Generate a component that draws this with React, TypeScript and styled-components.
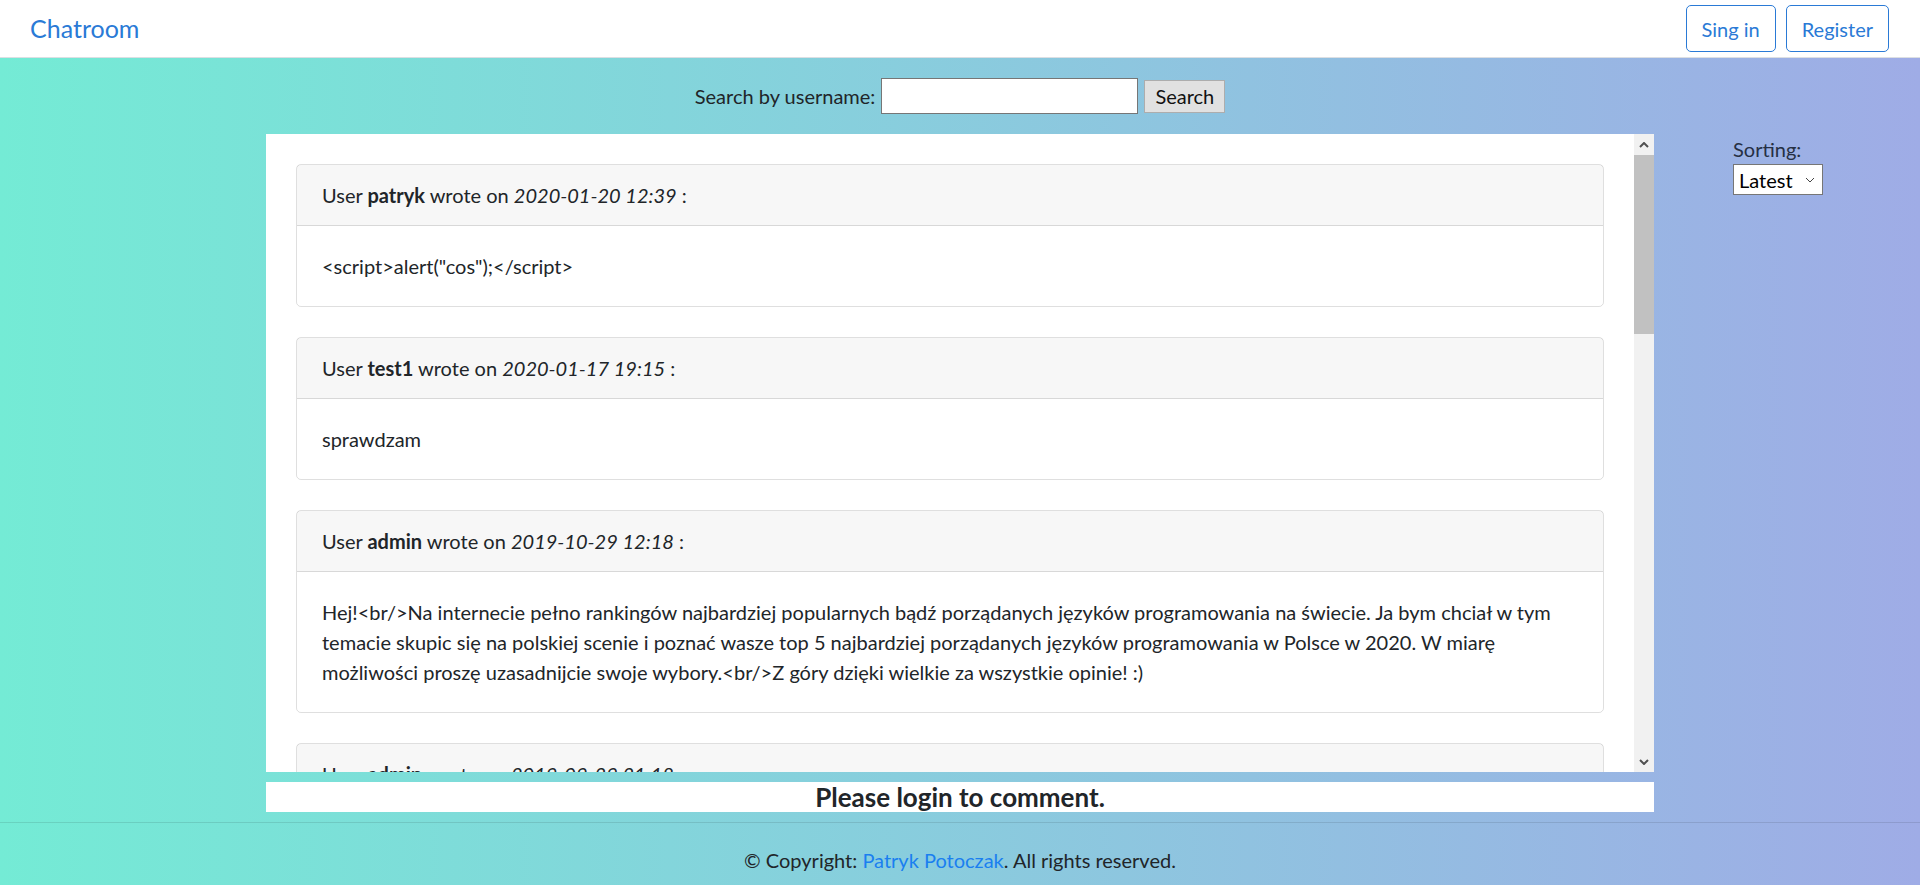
import React from "react";
import styled, { createGlobalStyle } from "styled-components";

interface IPost {
    id: number;
    user: string;
    date: string;
    text: string;
}

const posts: IPost[] = [
    { id: 1, user: "patryk", date: "2020-01-20 12:39", text: '<script>alert("cos");</script>' },
    { id: 2, user: "test1", date: "2020-01-17 19:15", text: "sprawdzam" },
    {
        id: 3,
        user: "admin",
        date: "2019-10-29 12:18",
        text: "Hej!<br/>Na internecie pełno rankingów najbardziej popularnych bądź porządanych języków programowania na świecie. Ja bym chciał w tym temacie skupic się na polskiej scenie i poznać wasze top 5 najbardziej porządanych języków programowania w Polsce w 2020. W miarę możliwości proszę uzasadnijcie swoje wybory.<br/>Z góry dzięki wielkie za wszystkie opinie! :)",
    },
    { id: 4, user: "admin", date: "2019-09-29 21:18", text: "Witajcie na czacie!" },
];

const GlobalStyle = createGlobalStyle`
    html, body {
        margin: 0;
        padding: 0;
    }

    body {
        font-family: "Segoe UI", Lato, "Noto Sans", sans-serif;
        font-size: 20px;
        line-height: 1.5;
        color: #212529;
        background: linear-gradient(90deg, #74ebd5 0%, #9face6 100%);
        min-height: 885px;
        overflow: hidden;
    }
`;

const Page = styled.div`
    display: flex;
    flex-direction: column;
    min-height: 885px;
`;

const Navbar = styled.nav`
    height: 57px;
    background: #fff;
    border-bottom: 1px solid #dcdfe3;
    display: flex;
    align-items: center;
    justify-content: space-between;
    padding: 0 31px 0 30px;
`;

const Brand = styled.a`
    font-size: 25px;
    line-height: 1.5;
    color: #2a7ad6;
    text-decoration: none;
`;

const NavActions = styled.div`
    display: flex;
    gap: 10px;
`;

const OutlineButton = styled.button`
    height: 47px;
    padding: 0 15px;
    font-family: inherit;
    font-size: 20px;
    color: #2a7ad6;
    background: #fff;
    border: 1px solid #2a7ad6;
    border-radius: 5px;
    cursor: pointer;
`;

const SearchForm = styled.form`
    height: 76px;
    display: flex;
    align-items: center;
    justify-content: center;
    gap: 6px;
`;

const SearchInput = styled.input`
    width: 257px;
    height: 36px;
    box-sizing: border-box;
    border: 1px solid #767676;
    background: #fff;
    font-family: inherit;
    font-size: 20px;
    padding: 0 4px;
`;

const SearchButton = styled.button`
    height: 33px;
    padding: 0 10px;
    font-family: inherit;
    font-size: 20px;
    color: #111;
    background: #e1e1e1;
    border: 1px solid #adadad;
    line-height: 1;
`;

const Main = styled.main`
    display: grid;
    grid-template-columns: 1fr 1388px 1fr;
    height: 638px;
`;

const Panel = styled.section`
    grid-column: 2;
    display: flex;
    background: #fff;
    overflow: hidden;
`;

const Feed = styled.div`
    flex: 1;
    padding: 30px;
    overflow: hidden;
`;

const Card = styled.article`
    border: 1px solid rgba(0, 0, 0, 0.125);
    border-radius: 5px;
    margin-bottom: 30px;
`;

const CardHeader = styled.div`
    padding: 15px 25px;
    background: rgba(0, 0, 0, 0.03);
    border-bottom: 1px solid rgba(0, 0, 0, 0.125);
`;

const CardBody = styled.div`
    padding: 25px;
`;

const ScrollRail = styled.div`
    width: 20px;
    display: flex;
    flex-direction: column;
    background: #f1f1f1;
`;

const ScrollArrow = styled.div`
    height: 21px;
    display: flex;
    align-items: center;
    justify-content: center;
`;

const ScrollTrack = styled.div`
    flex: 1;
`;

const ScrollThumb = styled.div`
    height: 179px;
    background: #c1c1c1;
`;

const Aside = styled.aside`
    grid-column: 3;
    padding-left: 79px;
`;

const SortLabel = styled.label`
    display: block;
    line-height: 30px;
    color: #263044;
`;

const SelectWrap = styled.div`
    position: relative;
    width: 90px;
    height: 31px;

    & > svg {
        position: absolute;
        right: 8px;
        top: 13px;
        pointer-events: none;
    }
`;

const SortSelect = styled.select`
    appearance: none;
    width: 100%;
    height: 100%;
    box-sizing: border-box;
    border: 1px solid #767676;
    border-radius: 0;
    background: #fff;
    font-family: inherit;
    font-size: 20px;
    color: #000;
    padding: 0 0 0 5px;
`;

const LoginBar = styled.h5`
    width: 1388px;
    margin: 10px auto 0;
    background: #fff;
    font-size: 26px;
    font-weight: 700;
    line-height: 30px;
    text-align: center;
`;

const Footer = styled.footer`
    margin-top: 10px;
    border-top: 1px solid rgba(0, 0, 0, 0.1);
    padding: 22px 0;
    text-align: center;

    & > a {
        color: #1a7ff0;
        text-decoration: none;
    }
`;

function Chevron(props: { up?: boolean }) {
    return (
        <svg width="10" height="6" viewBox="0 0 10 6">
            <path
                d={props.up ? "M1 5 L5 1 L9 5" : "M1 1 L5 5 L9 1"}
                fill="none"
                stroke="#505050"
                strokeWidth="2"
            />
        </svg>
    );
}

function App() {
    return (
        <Page>
            <GlobalStyle />
            <Navbar>
                <Brand href="#">Chatroom</Brand>
                <NavActions>
                    <OutlineButton>Sing in</OutlineButton>
                    <OutlineButton>Register</OutlineButton>
                </NavActions>
            </Navbar>
            <SearchForm onSubmit={e => e.preventDefault()}>
                <label htmlFor="username">Search by username:</label>
                <SearchInput id="username" type="text" />
                <SearchButton type="submit">Search</SearchButton>
            </SearchForm>
            <Main>
                <Panel>
                    <Feed>
                        {posts.map(post => (
                            <Card key={post.id}>
                                <CardHeader>
                                    User <b>{post.user}</b> wrote on <i>{post.date}</i> :
                                </CardHeader>
                                <CardBody>{post.text}</CardBody>
                            </Card>
                        ))}
                    </Feed>
                    <ScrollRail>
                        <ScrollArrow><Chevron up /></ScrollArrow>
                        <ScrollTrack>
                            <ScrollThumb />
                        </ScrollTrack>
                        <ScrollArrow><Chevron /></ScrollArrow>
                    </ScrollRail>
                </Panel>
                <Aside>
                    <SortLabel htmlFor="sorting">Sorting:</SortLabel>
                    <SelectWrap>
                        <SortSelect id="sorting" defaultValue="latest">
                            <option value="latest">Latest</option>
                            <option value="oldest">Oldest</option>
                        </SortSelect>
                        <svg width="10" height="6" viewBox="0 0 10 6">
                            <path d="M1 1 L5 5 L9 1" fill="none" stroke="#444" strokeWidth="1" />
                        </svg>
                    </SelectWrap>
                </Aside>
            </Main>
            <LoginBar>Please login to comment.</LoginBar>
            <Footer>
                © Copyright: <a href="#">Patryk Potoczak</a>. All rights reserved.
            </Footer>
        </Page>
    );
}

export default App;
